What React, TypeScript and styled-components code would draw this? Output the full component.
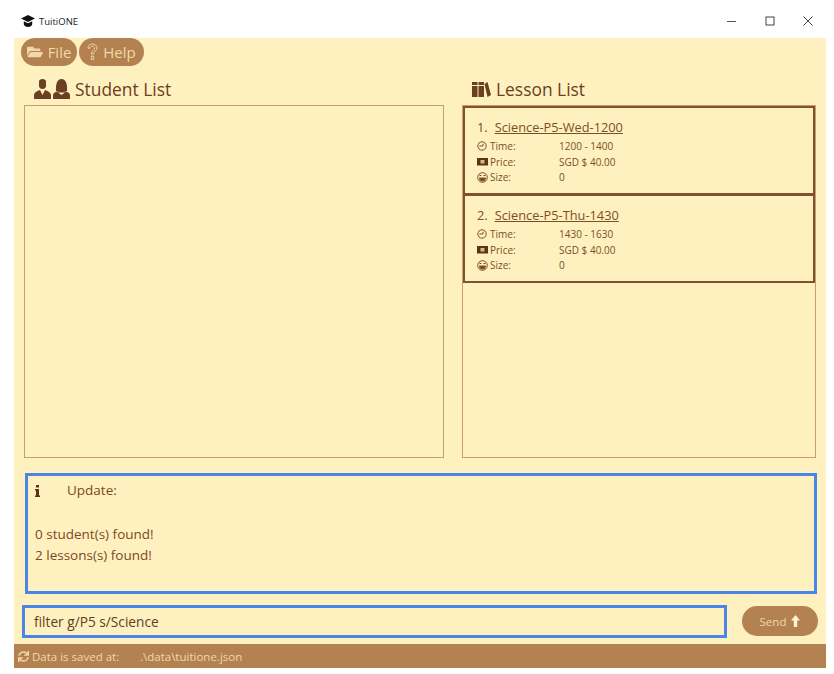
import React from 'react'
import styled, { createGlobalStyle } from 'styled-components'
import { FaFolderOpen, FaSync } from 'react-icons/fa'

const GlobalStyle = createGlobalStyle`
    html, body {
        margin: 0;
        padding: 0;
        background: #ffffff;
    }
    body {
        font-family: "Open Sans", "Noto Sans", sans-serif;
    }
`

const Page = styled.div`
    width: 834px;
    height: 674px;
    display: flex;
    flex-direction: column;
    overflow: hidden;
`

const TitleBar = styled.div`
    height: 38px;
    display: flex;
    align-items: center;
    padding: 4px 21px 0 21px;
    box-sizing: border-box;
    color: #1a1a2a;
    font-size: 9.5px;
`

const AppName = styled.span`
    margin-left: 4px;
    flex: 1;
`

const WindowButtons = styled.div`
    display: flex;
    align-items: center;
    gap: 28px;
`

const Window = styled.div`
    width: 812px;
    height: 630px;
    margin-left: 14px;
    background: #fff0c0;
    display: flex;
    flex-direction: column;
`

const MenuBar = styled.div`
    height: 29px;
    display: flex;
    gap: 2px;
    padding-left: 7px;
`

const MenuButton = styled.div<{ $width: number }>`
    width: ${(p) => p.$width}px;
    height: 28px;
    border-radius: 14px;
    background: #b38250;
    color: #f0d8a8;
    font-size: 15px;
    display: flex;
    align-items: center;
    justify-content: center;
    gap: 5px;
`

const Columns = styled.div`
    height: 391px;
    display: flex;
    padding-left: 10px;
    gap: 18px;
`

const Column = styled.div<{ $width: number }>`
    width: ${(p) => p.$width}px;
    display: flex;
    flex-direction: column;
`

const ColumnTitle = styled.div<{ $indent: number }>`
    height: 38px;
    padding: 6px 0 0 ${(p) => p.$indent}px;
    box-sizing: border-box;
    display: flex;
    align-items: center;
    gap: 5px;
    color: #6b4020;
    font-size: 17.4px;
`

const IconPair = styled.span`
    display: flex;
    gap: 2px;
`

const ListPanel = styled.div`
    height: 353px;
    box-sizing: border-box;
    border: 1px solid #c9a06c;
`

const LessonCard = styled.div`
    height: 89px;
    margin: 0 0 -1px;
    box-sizing: border-box;
    border: 2px solid #7d5230;
    padding: 10px 0 0 12px;
    color: #7a4f28;
`

const LessonHead = styled.div`
    display: flex;
    gap: 7px;
    font-size: 12.8px;
    line-height: 18px;
    margin-bottom: 2px;
`

const LessonName = styled.span`
    text-decoration: underline;
`

const DetailRow = styled.div`
    display: flex;
    align-items: center;
    height: 15.7px;
    font-size: 10px;
`

const DetailIcon = styled.span`
    width: 13px;
    display: flex;
    align-items: center;
`

const DetailLabel = styled.span`
    width: 69px;
`

const ResultBox = styled.div`
    width: 792px;
    height: 121px;
    margin: 15px 0 0 11px;
    box-sizing: border-box;
    border: 3px solid #4a86e8;
    padding: 4px 7px;
    color: #7a4a20;
    font-size: 13.5px;
    line-height: 21.5px;
`

const ResultHead = styled.div`
    display: flex;
    align-items: center;
    margin-bottom: 22px;
`

const ResultIcon = styled.span`
    width: 32px;
    display: flex;
`

const CommandRow = styled.div`
    display: flex;
    align-items: flex-start;
    height: 34px;
    margin-top: 11px;
    padding-left: 8px;
`

const CommandBox = styled.div`
    width: 705px;
    height: 33px;
    box-sizing: border-box;
    border: 3px solid #4a86e8;
    padding: 0 0 1px 9px;
    display: flex;
    align-items: center;
    color: #5e3f1e;
    font-size: 13.7px;
`

const SendButton = styled.div`
    width: 76px;
    height: 30px;
    margin: 1px 0 0 15px;
    border-radius: 15px;
    background: #b38250;
    color: #f0d8a8;
    font-size: 11.5px;
    display: flex;
    align-items: center;
    justify-content: center;
    gap: 5px;
`

const StatusBar = styled.div`
    height: 24px;
    margin-top: 5px;
    background: #b38250;
    color: #f0d8a8;
    font-size: 11.5px;
    display: flex;
    align-items: center;
    padding-left: 4px;
`

const StatusLabel = styled.span`
    margin-left: 3px;
    width: 108px;
`

const CapIcon = () => (
    <svg width="14" height="12" viewBox="0 0 14 12">
        <path d="M7 0L14 3.5 7 7 0 3.5z" fill="#111" />
        <path d="M2.8 6.2L7 8.3l4.2-2.1v3C11.2 10.8 9 12 7 12s-4.2-1.2-4.2-2.8z" fill="#111" />
    </svg>
)

const QuestionIcon = () => (
    <svg width="11" height="18" viewBox="0 0 11 18">
        <path
            d="M1 5.2C1 2.6 3 1 5.5 1S10 2.6 10 5c0 2.8-3.4 3.3-3.4 6H4.4c0-3.6 3.3-3.9 3.3-6C7.7 3.9 6.8 3.2 5.5 3.2S3.2 4 3.2 5.2zM4.4 13h2.2v3.5H4.4z"
            fill="none"
            stroke="#f0d8a8"
            strokeWidth="0.9"
        />
    </svg>
)

const TeacherIcon = () => (
    <svg width="17" height="20" viewBox="0 0 17 20">
        <path d="M5 2.5C5 1 6.5 0 8.5 0S12 1 12 2.5V4H5z" fill="#6b4020" />
        <ellipse cx="8.5" cy="6" rx="3.6" ry="4" fill="#6b4020" />
        <path d="M0 20v-3.5C0 13.5 3 12 6 11l2.5 5L11 11c3 1 6 2.5 6 5.5V20z" fill="#6b4020" />
    </svg>
)

const StudentIcon = () => (
    <svg width="17" height="20" viewBox="0 0 17 20">
        <path d="M3 12C2.5 5 4 0 8.5 0S14.5 5 14 12z" fill="#6b4020" />
        <path d="M0 20v-3.5C0 14 3 12.5 6 12h5c3 .5 6 2 6 4.5V20z" fill="#6b4020" />
        <path d="M5 13.5h7L8.5 16z" fill="#fff0c0" />
    </svg>
)

const BooksIcon = () => (
    <svg width="19" height="15" viewBox="0 0 19 15">
        <path d="M0 0h5.5v15H0zM6.5 0H12v15H6.5z" fill="#6b4020" />
        <path d="M0 3h12v1H0z" fill="#fff0c0" />
        <path d="M12.5 2L15.5 0 19 13l-3.5 2z" fill="#6b4020" />
    </svg>
)

const ClockIcon = () => (
    <svg width="10" height="10" viewBox="0 0 10 10">
        <circle cx="5" cy="5" r="4.2" fill="none" stroke="currentColor" strokeWidth="1" />
        <path d="M2.5 5h3.5V2.8" fill="none" stroke="currentColor" strokeWidth="1" />
    </svg>
)

const MoneyIcon = () => (
    <svg width="11" height="8" viewBox="0 0 11 8">
        <path d="M0 0h11v7.5H0z" fill="#5a3414" />
        <rect x="3.5" y="2" width="4" height="3.5" fill="#d8b888" />
    </svg>
)

const GrinIcon = () => (
    <svg width="11" height="11" viewBox="0 0 11 11">
        <circle cx="5.5" cy="5.5" r="4.8" fill="none" stroke="currentColor" strokeWidth="1" />
        <path d="M2.5 3.5h2M6.5 3.5h2" stroke="currentColor" strokeWidth="1" />
        <path d="M2 5.5h7C9 8 7.5 9.5 5.5 9.5S2 8 2 5.5z" fill="currentColor" />
    </svg>
)

const InfoIcon = () => (
    <svg width="5" height="12" viewBox="0 0 5 12">
        <path d="M1 0h3v2.5H1zM0 4h4v6.5h1V12H0v-1.5h1V5.5H0z" fill="#5a3414" />
    </svg>
)

const SendArrow = () => (
    <svg width="9" height="12" viewBox="0 0 9 12">
        <path d="M4.5 0L9 5.5H6.2V12H2.8V5.5H0z" fill="#fff4d8" />
    </svg>
)

type Lesson = {
    name: string
    time: string
}

const lessons: Array<Lesson> = [
    { name: 'Science-P5-Wed-1200', time: '1200 - 1400' },
    { name: 'Science-P5-Thu-1430', time: '1430 - 1630' },
]

const App = () => {
    return (
        <Page>
            <GlobalStyle />
            <TitleBar>
                <CapIcon />
                <AppName>TuitiONE</AppName>
                <WindowButtons>
                    <svg width="10" height="10" viewBox="0 0 10 10">
                        <path d="M0 5.5h9" stroke="#555" fill="none" />
                    </svg>
                    <svg width="10" height="10" viewBox="0 0 10 10">
                        <rect x="1" y="1" width="8" height="8" stroke="#444" fill="none" />
                    </svg>
                    <svg width="10" height="10" viewBox="0 0 10 10">
                        <path d="M.5.5l9 9M9.5.5l-9 9" stroke="#444" fill="none" />
                    </svg>
                </WindowButtons>
            </TitleBar>
            <Window>
                <MenuBar>
                    <MenuButton $width={56}>
                        <FaFolderOpen size={16} />
                        File
                    </MenuButton>
                    <MenuButton $width={65}>
                        <QuestionIcon />
                        Help
                    </MenuButton>
                </MenuBar>
                <Columns>
                    <Column $width={420}>
                        <ColumnTitle $indent={10}>
                            <IconPair>
                                <TeacherIcon />
                                <StudentIcon />
                            </IconPair>
                            Student List
                        </ColumnTitle>
                        <ListPanel />
                    </Column>
                    <Column $width={354}>
                        <ColumnTitle $indent={10}>
                            <BooksIcon />
                            Lesson List
                        </ColumnTitle>
                        <ListPanel>
                            {lessons.map((lesson, i) => (
                                <LessonCard key={lesson.name}>
                                    <LessonHead>
                                        <span>{i + 1}.</span>
                                        <LessonName>{lesson.name}</LessonName>
                                    </LessonHead>
                                    <DetailRow>
                                        <DetailIcon>
                                            <ClockIcon />
                                        </DetailIcon>
                                        <DetailLabel>Time:</DetailLabel>
                                        {lesson.time}
                                    </DetailRow>
                                    <DetailRow>
                                        <DetailIcon>
                                            <MoneyIcon />
                                        </DetailIcon>
                                        <DetailLabel>Price:</DetailLabel>
                                        SGD $ 40.00
                                    </DetailRow>
                                    <DetailRow>
                                        <DetailIcon>
                                            <GrinIcon />
                                        </DetailIcon>
                                        <DetailLabel>Size:</DetailLabel>0
                                    </DetailRow>
                                </LessonCard>
                            ))}
                        </ListPanel>
                    </Column>
                </Columns>
                <ResultBox>
                    <ResultHead>
                        <ResultIcon>
                            <InfoIcon />
                        </ResultIcon>
                        Update:
                    </ResultHead>
                    <div>0 student(s) found!</div>
                    <div>2 lessons(s) found!</div>
                </ResultBox>
                <CommandRow>
                    <CommandBox>filter g/P5 s/Science</CommandBox>
                    <SendButton>
                        Send
                        <SendArrow />
                    </SendButton>
                </CommandRow>
                <StatusBar>
                    <FaSync size={11} />
                    <StatusLabel>Data is saved at:</StatusLabel>
                    .\data\tuitione.json
                </StatusBar>
            </Window>
        </Page>
    )
}

export default App
